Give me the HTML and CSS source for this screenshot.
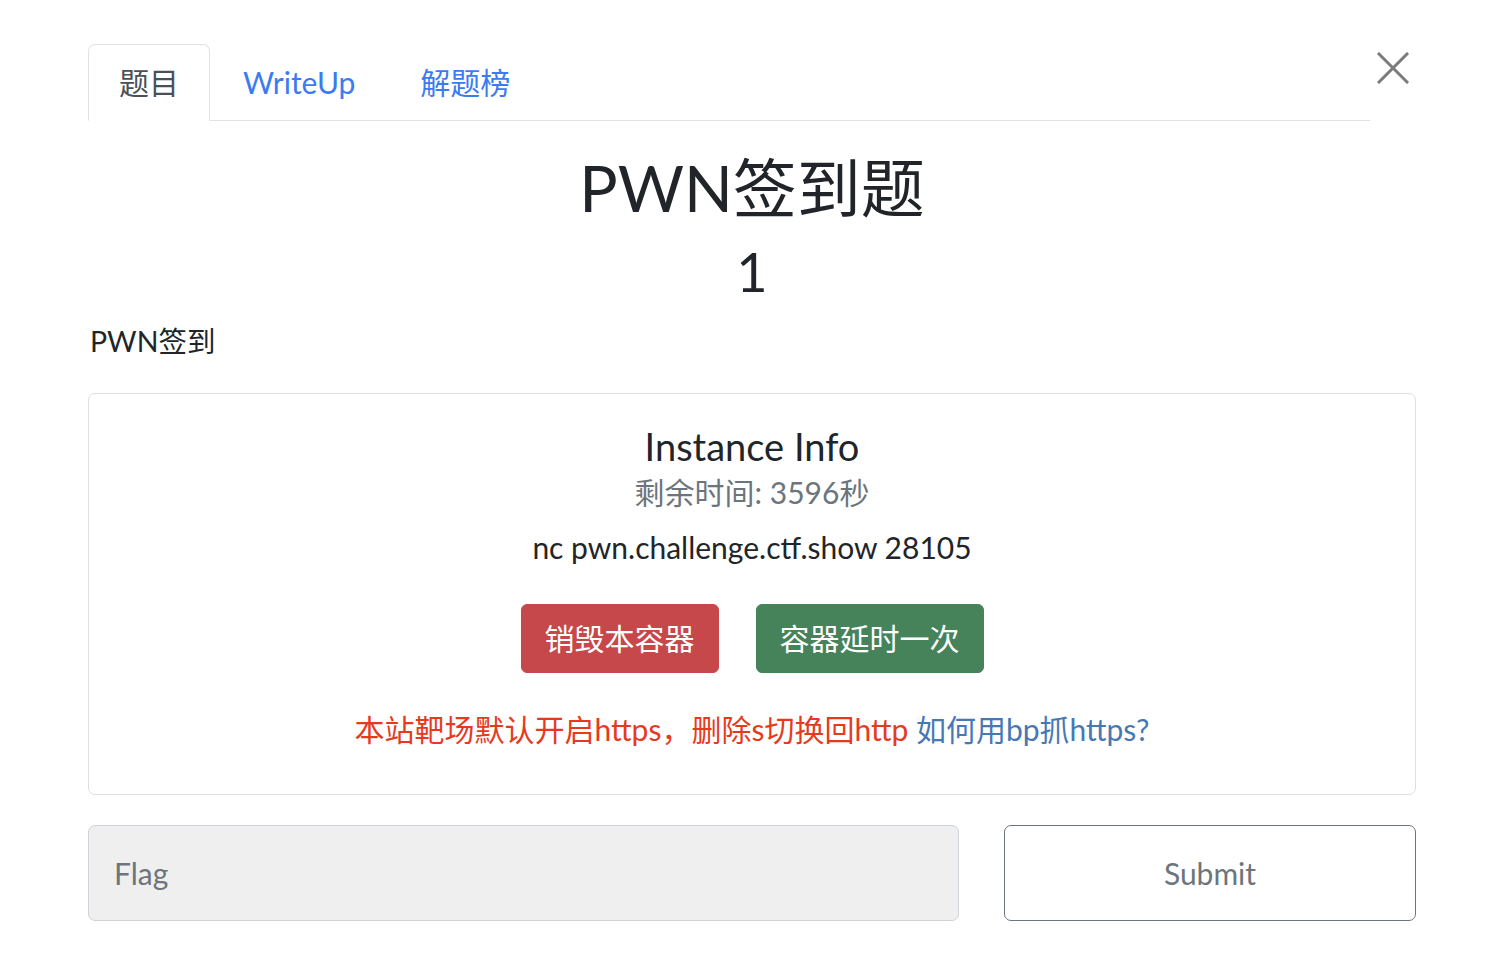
FILE: index.html
```html
<!DOCTYPE html>
<html lang="zh-CN">
<head>
<meta charset="utf-8">
<title>PWN签到题</title>
<link rel="stylesheet" href="styles.css">
</head>
<body>
<div class="modal">
  <div class="modal-header">
    <ul class="nav-tabs">
      <li class="tab active">题目</li>
      <li class="tab">WriteUp</li>
      <li class="tab">解题榜</li>
    </ul>
    <button class="close" aria-label="Close">
      <svg width="32" height="32" viewBox="0 0 32 32"><path d="M2 2 L30 30 M30 2 L2 30" stroke="#7b7b7b" stroke-width="3" stroke-linecap="square" fill="none"/></svg>
    </button>
  </div>
  <h1 class="title">PWN签到题</h1>
  <h2 class="value">1</h2>
  <p class="desc">PWN签到</p>
  <div class="card">
    <h4 class="card-title">Instance Info</h4>
    <h6 class="subtitle">剩余时间: 3596秒</h6>
    <p class="host">nc pwn.challenge.ctf.show 28105</p>
    <div class="actions">
      <button class="btn btn-danger">销毁本容器</button>
      <button class="btn btn-success">容器延时一次</button>
    </div>
    <p class="notice"><span class="red">本站靶场默认开启https，删除s切换回http</span> <a class="blue">如何用bp抓https?</a></p>
  </div>
  <div class="submit-row">
    <input class="flag" type="text" placeholder="Flag">
    <button class="submit">Submit</button>
  </div>
</div>
</body>
</html>
```

FILE: styles.css
```css
html, body {
  margin: 0;
  padding: 0;
  background: #fff;
}
body {
  font-family: Lato, "Noto Sans CJK SC", sans-serif;
  color: #212529;
  font-size: 30px;
  line-height: 1.5;
}
.modal {
  padding: 44px 81px 0 88px;
}
.modal-header {
  display: flex;
  align-items: flex-start;
}
.nav-tabs {
  flex: 1;
  display: flex;
  margin: 0;
  padding: 0;
  list-style: none;
  border-bottom: 1px solid #dee2e6;
}
.tab {
  padding: 15px 30px 15px;
  border: 1px solid transparent;
  border-top-left-radius: 7px;
  border-top-right-radius: 7px;
  margin-bottom: -1px;
  color: #3a7cf0;
  font-size: 30px;
  line-height: 45px;
}
.tab + .tab {
  padding: 15px 31px 15px 32px;
}
.writeup {
  letter-spacing: 0.5px;
}
.tab.active {
  color: #495057;
  border-color: #dee2e6 #dee2e6 #fff;
  background: #fff;
}
.close {
  width: 46px;
  height: 46px;
  margin-top: 1px;
  padding: 0;
  border: 0;
  background: none;
  display: flex;
  align-items: center;
  justify-content: center;
}
.title {
  margin: 28px 0 0;
  text-align: center;
  font-weight: 400;
  font-size: 64px;
  line-height: 77px;
}
.value {
  margin: 13px 0 0;
  text-align: center;
  font-weight: 400;
  font-size: 54px;
  line-height: 65px;
}
.desc {
  margin: 16px 0 0;
  padding-left: 2px;
  font-size: 28.5px;
  line-height: 43px;
}
.card {
  margin-top: 30px;
  border: 1px solid #dfdfdf;
  border-radius: 7px;
  padding: 29px 28px 42px;
  text-align: center;
}
.card-title {
  margin: 0;
  font-weight: 400;
  font-size: 38px;
  line-height: 46px;
}
.subtitle {
  margin: 3px 0 0;
  font-weight: 400;
  font-size: 30px;
  line-height: 40px;
  color: #6c757d;
}
.host {
  margin: 13px 0 0;
  font-size: 30px;
  line-height: 45px;
}
.actions {
  display: flex;
  justify-content: center;
  gap: 37px;
  margin-top: 34px;
}
.btn {
  font-family: Lato, "Noto Sans CJK SC", sans-serif;
  font-size: 30px;
  line-height: 45px;
  padding: 11px 23px;
  border: 1px solid transparent;
  border-radius: 6px;
  color: #fff;
}
.btn-danger {
  background: #c6484a;
  border-color: #c6484a;
}
.btn-success {
  background: #46825a;
  border-color: #46825a;
}
.notice {
  margin: 34px 0 0;
  font-size: 30px;
  line-height: 45px;
}
.red {
  color: #e63a1e;
}
.blue {
  color: #4679b4;
}
.submit-row {
  display: flex;
  gap: 45px;
  margin-top: 30px;
}
.flag {
  flex: 0 0 871px;
  box-sizing: border-box;
  height: 96px;
  border: 1px solid #ced4da;
  border-radius: 7px;
  background: #efefef;
  padding: 0 25px;
  font-family: Lato, "Noto Sans CJK SC", sans-serif;
  font-size: 30px;
  color: #495057;
}
.flag::placeholder {
  color: #6c757d;
}
.submit {
  flex: 1;
  box-sizing: border-box;
  height: 96px;
  border: 1px solid #6c757d;
  border-radius: 7px;
  background: #fff;
  font-family: Lato, "Noto Sans CJK SC", sans-serif;
  font-size: 30px;
  color: #6c757d;
}
```
